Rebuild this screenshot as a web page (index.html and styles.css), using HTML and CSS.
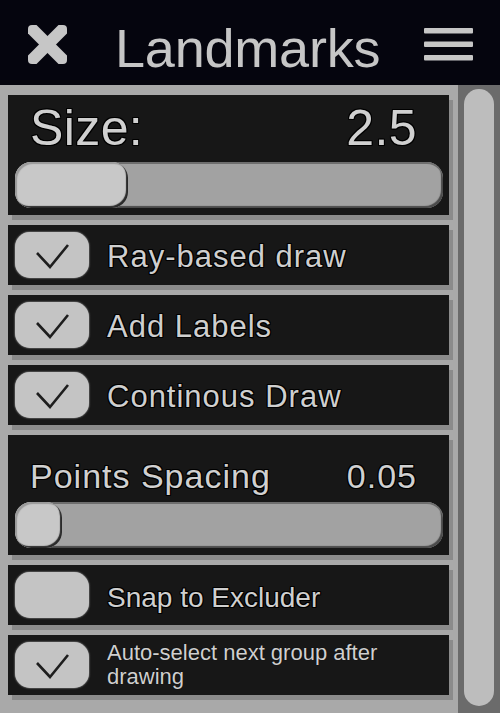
FILE: index.html
```html
<!DOCTYPE html>
<html>
<head>
<meta charset="utf-8">
<link rel="stylesheet" href="styles.css">
</head>
<body>
<div class="app">
  <header class="header">
    <svg class="close-icon" width="39" height="39" viewBox="0 0 39 39">
      <defs>
        <clipPath id="xclip"><rect x="0" y="0" width="39" height="39" rx="4"/></clipPath>
      </defs>
      <g clip-path="url(#xclip)" stroke="#c6c6c6" stroke-width="12" stroke-linecap="square">
        <line x1="4" y1="4" x2="35" y2="35"/>
        <line x1="35" y1="4" x2="4" y2="35"/>
      </g>
    </svg>
    <span class="title">Landmarks</span>
    <svg class="menu-icon" width="49" height="33" viewBox="0 0 49 33">
      <rect x="0" y="0" width="49" height="5.5" rx="1" fill="#c6c6c6"/>
      <rect x="0" y="13.5" width="49" height="5.5" rx="1" fill="#c6c6c6"/>
      <rect x="0" y="27" width="49" height="5.5" rx="1" fill="#c6c6c6"/>
    </svg>
  </header>
  <div class="body">
    <div class="content">
      <section class="panel slider-panel">
        <div class="slider-head big">
          <span>Size:</span><span>2.5</span>
        </div>
        <div class="track"><div class="knob" style="width: 113px"></div></div>
      </section>
      <section class="panel check-panel">
        <div class="checkbox"><svg class="tick" width="74" height="46" viewBox="0 0 74 46"><polyline points="22,21 35,35 53,13"/></svg></div>
        <span class="label">Ray-based draw</span>
      </section>
      <section class="panel check-panel">
        <div class="checkbox"><svg class="tick" width="74" height="46" viewBox="0 0 74 46"><polyline points="22,21 35,35 53,13"/></svg></div>
        <span class="label">Add Labels</span>
      </section>
      <section class="panel check-panel">
        <div class="checkbox"><svg class="tick" width="74" height="46" viewBox="0 0 74 46"><polyline points="22,21 35,35 53,13"/></svg></div>
        <span class="label">Continous Draw</span>
      </section>
      <section class="panel slider-panel">
        <div class="slider-head mid">
          <span>Points Spacing</span><span>0.05</span>
        </div>
        <div class="track"><div class="knob" style="width: 47px"></div></div>
      </section>
      <section class="panel check-panel">
        <div class="checkbox"></div>
        <span class="label snap">Snap to Excluder</span>
      </section>
      <section class="panel check-panel">
        <div class="checkbox"><svg class="tick" width="74" height="46" viewBox="0 0 74 46"><polyline points="22,21 35,35 53,13"/></svg></div>
        <span class="label small">Auto-select next group after drawing</span>
      </section>
    </div>
    <div class="scrollbar"><div class="scroll-thumb"></div></div>
  </div>
</div>
</body>
</html>
```
FILE: styles.css
```css
* { box-sizing: border-box; }
html, body {
  margin: 0;
  padding: 0;
  width: 500px;
  height: 713px;
  overflow: hidden;
  background: #a9a9a9;
  font-family: "Liberation Sans", Arial, sans-serif;
}
.app {
  width: 500px;
  height: 713px;
  display: flex;
  flex-direction: column;
}
.header {
  height: 85px;
  flex: none;
  background: #05050e;
  display: flex;
  align-items: center;
  padding-left: 28px;
  padding-top: 4px;
}
.close-icon { flex: none; display: block; }
.title {
  margin-left: 48px;
  font-size: 54px;
  line-height: 54px;
  color: #c6c6c6;
  padding-top: 6px;
  letter-spacing: -0.2px;
}
.menu-icon {
  margin-left: auto;
  margin-right: 27px;
  display: block;
}
.body {
  flex: 1;
  display: flex;
  min-height: 0;
}
.content {
  width: 458px;
  flex: none;
  padding: 10px 0 0 8px;
  display: flex;
  flex-direction: column;
  gap: 10px;
}
.panel {
  width: 441px;
  background: #171717;
  box-shadow: 4px 5px 0 #8b8b8b;
  color: #d0d0d0;
  text-shadow: -1px -1px 0 #000, 1px -1px 0 #000, -1px 1px 0 #000, 1px 1px 0 #000, 0 1px 0 #000, 0 -1px 0 #000, 1px 0 0 #000, -1px 0 0 #000;
}
.slider-panel {
  height: 120px;
  display: flex;
  flex-direction: column;
}
.slider-head {
  display: flex;
  justify-content: space-between;
  padding: 0 32px 0 22px;
}
.slider-head.big {
  font-size: 50px;
  line-height: 50px;
  height: 67px;
  padding-top: 8px;
  letter-spacing: 0.4px;
}
.slider-head.mid {
  font-size: 34px;
  line-height: 34px;
  height: 67px;
  padding-top: 24px;
  letter-spacing: 1px;
}
.track {
  margin: 0 6px 0 7px;
  height: 46px;
  border-radius: 16px;
  background: #a2a2a2;
  box-shadow: inset 0 2px 0 #6e6e6e, inset -2px -2px 1px #4a4a4a;
  overflow: hidden;
}
.knob {
  height: 46px;
  border-radius: 16px;
  background: #c8c8c8;
  box-shadow: inset -2px -2px 1px #2a2a2a, inset 2px 2px 1px #9a9a9a;
}
.check-panel {
  height: 60px;
  display: flex;
  align-items: center;
  padding-left: 7px;
}
.checkbox {
  width: 74px;
  height: 46px;
  flex: none;
  border-radius: 15px;
  background: #c4c4c4;
  box-shadow: 0 0 2px #c4c4c4;
}
.tick {
  display: block;
}
.tick polyline {
  fill: none;
  stroke: #1e1e1e;
  stroke-width: 2.6;
}
.label {
  margin-left: 18px;
  font-size: 31px;
  line-height: 31px;
  padding-top: 3px;
  letter-spacing: 1px;
  color: #cfcfcf;
}
.label.snap {
  font-size: 28px;
  letter-spacing: 0;
  padding-top: 4px;
}
.label.small {
  font-size: 22px;
  line-height: 24px;
  padding-top: 0;
  padding-right: 50px;
  letter-spacing: 0;
  text-shadow: 0 0 1px #000;
}
.scrollbar {
  flex: 1;
  background: #6b6b6b;
  padding: 4px 6px 7px 6px;
  display: flex;
}
.scroll-thumb {
  flex: 1;
  border-radius: 15px;
  background: #bdbdbd;
}
```
